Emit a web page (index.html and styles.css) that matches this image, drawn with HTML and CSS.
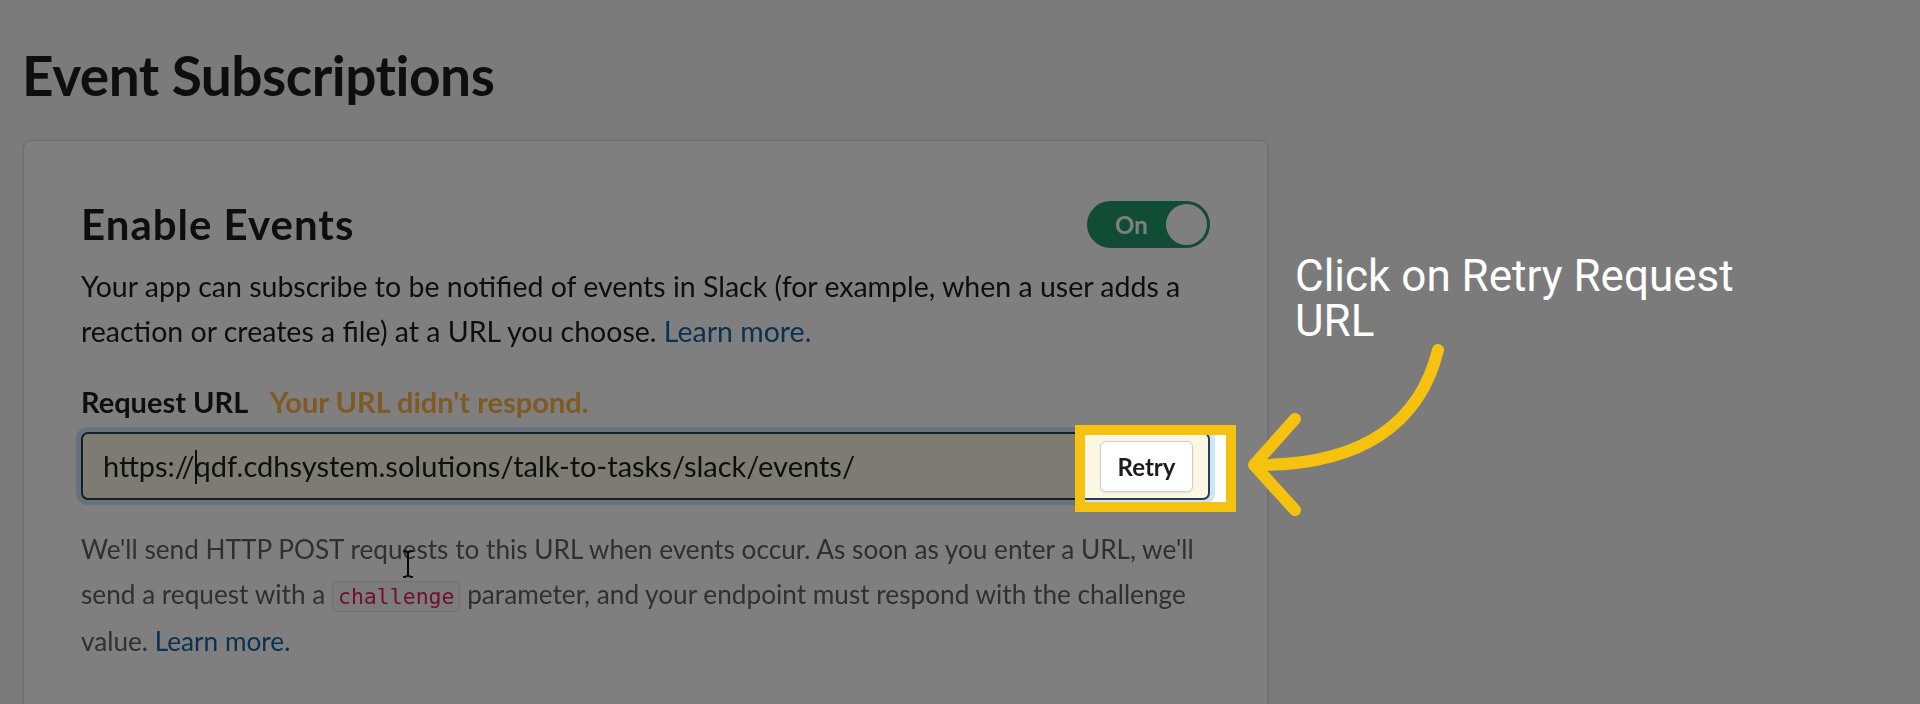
FILE: index.html
```html
<!DOCTYPE html>
<html lang="en">
<head>
    <meta charset="UTF-8">
    <title>Event Subscriptions</title>
    <link rel="stylesheet" href="styles.css">
</head>
<body>
    <div class="page">
        <h1 class="page-title">Event Subscriptions</h1>

        <div class="card">
            <div class="card-head">
                <h2 class="card-title">Enable Events</h2>
                <div class="toggle">
                    <span class="toggle-label">On</span>
                    <span class="toggle-knob"></span>
                </div>
            </div>
            <p class="lead">Your app can subscribe to be notified of events in Slack (for example, when a user adds a reaction or creates a file) at a URL you choose. <a href="#" class="link">Learn more.</a></p>

            <div class="field-label">
                <strong>Request URL</strong>
                <span class="field-warning">Your URL didn't respond.</span>
            </div>
            <div class="url-input">
                <span class="url-text">https://<span class="caret"></span>qdf.cdhsystem.solutions/talk-to-tasks/slack/events/</span>
                <button class="btn-retry">Retry</button>
            </div>

            <p class="hint">We'll send HTTP POST requests to this URL when events occur. As soon as you enter a URL, we'll send a request with a <code class="code">challenge</code> parameter, and your endpoint must respond with the challenge value. <a href="#" class="link">Learn more.</a></p>
        </div>
    </div>

    <!-- mouse pointer over the hint text -->
    <svg class="ibeam" width="16" height="30" viewBox="0 0 16 30">
        <path d="M3 2 Q8 2 8 5 Q8 2 13 2 M8 5 V25 M3 28 Q8 28 8 25 Q8 28 13 28" fill="none" stroke="#111" stroke-width="2"/>
    </svg>

    <!-- walkthrough step -->
    <div class="spotlight"></div>
    <div class="callout">Click on Retry Request<br>URL</div>
    <svg class="callout-arrow" width="220" height="190" viewBox="1240 340 220 190">
        <path d="M1438 350 C1420 423 1362 465 1258 465" />
        <path d="M1295 419 L1254 465 L1295 510" />
    </svg>
</body>
</html>
```

FILE: styles.css
```css
html, body {
    margin: 0;
    height: 100%;
    overflow: hidden;
}

body {
    position: relative;
    background-color: #f7f7f7;
    font-family: Lato, "Noto Sans", sans-serif;
    color: #1d1c1d;
}

.page {
    padding: 42px 0 0 22px;
    filter: blur(0.5px);
}

.page-title {
    margin: 0 0 32px;
    font-size: 55px;
    line-height: 66px;
    font-weight: 700;
    letter-spacing: -0.5px;
}

.card {
    box-sizing: border-box;
    width: 1245px;
    padding: 60px 57px 200px;
    margin-left: 1px;
    background-color: white;
    border: 1px solid #dcdcdc;
    border-radius: 8px;
    box-shadow: 0 1px 4px rgba(0,0,0,0.08);
}

.card-head {
    display: flex;
    justify-content: space-between;
    align-items: center;
    height: 47px;
}

.card-title {
    margin: 0;
    font-size: 42px;
    line-height: 47px;
    font-weight: 700;
    letter-spacing: 1px;
}

/* switch */
.toggle {
    box-sizing: border-box;
    display: flex;
    align-items: center;
    justify-content: space-between;
    width: 123px;
    height: 47px;
    padding: 0 3px 0 28px;
    border-radius: 24px;
    background-color: #22996a;
}

.toggle-label {
    color: white;
    font-size: 24px;
    font-weight: 700;
}

.toggle-knob {
    width: 41px;
    height: 41px;
    border-radius: 50%;
    background-color: white;
}

.lead {
    margin: 16px 0 0;
    font-size: 28.5px;
    line-height: 45px;
}

.hint {
    margin: 27px 0 0;
    font-size: 26.2px;
    line-height: 45px;
    color: #616061;
}

.link {
    color: #1264a3;
    text-decoration: none;
}

.field-label {
    margin-top: 31px;
    font-size: 29px;
    line-height: 34px;
}

.field-warning {
    margin-left: 14px;
    color: #fdb64a;
    font-weight: 700;
}

.url-input {
    box-sizing: border-box;
    display: flex;
    align-items: center;
    justify-content: space-between;
    height: 68px;
    margin-top: 13px;
    padding: 0 15px 0 20px;
    background-color: #fcf6e4;
    border: 2px solid #27404f;
    border-radius: 7px;
    box-shadow: 0 0 0 5px #cfe5f6;
}

.url-text {
    font-size: 29px;
    color: #1d1c1d;
}

.caret {
    display: inline-block;
    width: 2px;
    height: 34px;
    margin-right: -2px;
    vertical-align: -7px;
    background-color: #1d1c1d;
}

.btn-retry {
    width: 93px;
    height: 51px;
    padding: 0;
    font-family: Lato, sans-serif;
    font-size: 24px;
    font-weight: 700;
    color: #1d1c1d;
    background-color: white;
    border: 1px solid #cfcfcf;
    border-radius: 6px;
    box-shadow: 0 1px 2px rgba(0,0,0,0.1);
}

.code {
    padding: 2px 5px;
    font-family: "DejaVu Sans Mono", monospace;
    font-size: 21.5px;
    color: #e01e5a;
    background-color: #f8f8f8;
    border: 1px solid #dedede;
    border-radius: 4px;
}

.ibeam {
    position: absolute;
    left: 400px;
    top: 549px;
}

/* walkthrough overlay */
.spotlight {
    position: absolute;
    left: 1075px;
    top: 425px;
    box-sizing: border-box;
    width: 161px;
    height: 87px;
    border: 10px solid #f5c30f;
    box-shadow: 0 0 0 3000px rgba(0,0,0,0.5);
}

.callout {
    position: absolute;
    left: 1295px;
    top: 254px;
    font-family: Roboto, sans-serif;
    font-size: 44px;
    line-height: 45px;
    color: white;
}

.callout-arrow {
    position: absolute;
    left: 1240px;
    top: 340px;
    fill: none;
    stroke: #f5c30f;
    stroke-width: 12;
    stroke-linecap: round;
    stroke-linejoin: round;
}
```
